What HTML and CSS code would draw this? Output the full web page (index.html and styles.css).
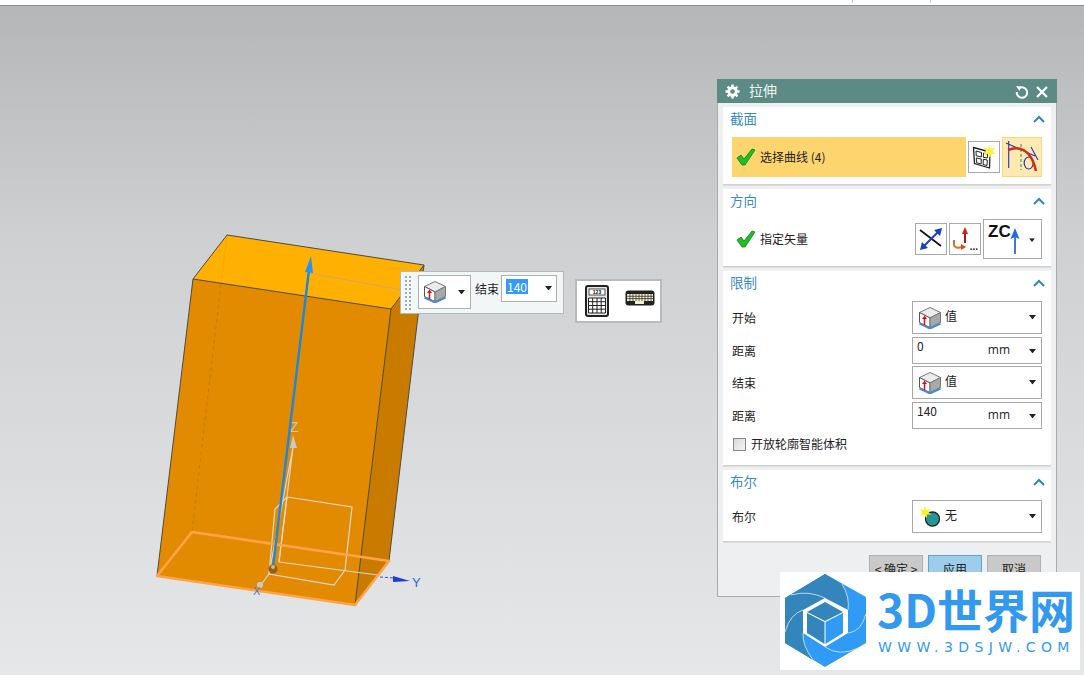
FILE: index.html
```html
<!DOCTYPE html>
<html lang="zh">
<head>
<meta charset="utf-8">
<title>拉伸</title>
<link rel="stylesheet" href="styles.css">
</head>
<body>
<svg class="defs" width="0" height="0" aria-hidden="true">
  <symbol id="cube" viewBox="0 0 22 22">
    <polygon points="11,.5 21.500,5.500 11,11 .5,5.500" fill="#ececec" stroke="#777" stroke-width="1"/>
    <polygon points=".5,5.500 11,11 11,20.500 .5,15.500" fill="#fff" stroke="#555" stroke-width="1"/>
    <polygon points="11,11 21.500,5.500 21.500,15.500 11,20.500" fill="#a9a9a9" stroke="#777" stroke-width="1"/>
    <polyline points=".5,16.500 11,21.500 21.500,16.500" fill="none" stroke="#4a8bd0" stroke-width="2"/>
    <path d="M5.500 18V11" stroke="#d11" stroke-width="1.500"/>
    <path d="M3 12 5.500 8.400 8 12Z" fill="#d11"/>
  </symbol>
  <symbol id="check" viewBox="0 0 20 20">
    <path d="M1 11 5 8 8 12 16 2 19 3 9 18 6 18Z" fill="#1fc01f" stroke="#0d7d1a" stroke-width=".8"/>
  </symbol>
  <symbol id="chev" viewBox="0 0 12 8">
    <path d="M1 7 6 2l5 5" fill="none" stroke="#2f86c4" stroke-width="2"/>
  </symbol>
  <symbol id="caret" viewBox="0 0 8 5">
    <path d="M0 0h8L4 5Z" fill="#222"/>
  </symbol>
</svg>

<div class="app">
  <div class="topbar">
    <span class="tick tick-a"></span>
    <span class="tick tick-b"></span>
  </div>
  <main class="viewport">
    <svg class="scene" viewBox="0 6 1084 669" width="1084" height="669">
      <polygon points="193,279 391,309 355,605 157,576" fill="#e38b00"/>
      <polygon points="227,235 424,265 391,309 193,279" fill="#ffb000"/>
      <polygon points="391,309 424,265 389,561 355,605" fill="#c97b00"/>
      <path d="M221 284 192 532" stroke="#b5770c" stroke-width="1" stroke-dasharray="4 3" stroke-opacity=".7" fill="none"/>
      <path d="M227 235 221 284" stroke="#f3a800" stroke-width="1" fill="none"/>
      <path d="M193 279 157 576M391 309 355 605M227 235 424 265 391 309 193 279 227 235M424 265 389 561" stroke="#4e4a45" stroke-width="1" fill="none"/>
      <path d="M309 273 402 290" stroke="#cfa866" stroke-width="1.200"/>
      <g fill="none" stroke="#d9d6cf" stroke-width="1.200">
        <path d="M287 497 352 507 345 570 334 585 269 574 275 509Z"/>
        <path d="M279 562 287 497M279 562 378 575"/>
        <path d="M269 574 293 447M279 562 293 447"/>
        <path d="M269 574 260 586"/>
      </g>
      <path d="M293 435 297 448H290Z" fill="#c9c9c9"/>
      <text class="axis axis-z" x="290" y="432">Z</text>
      <polygon points="157,576 192,532 389,561 355,605" fill="none" stroke="#ffa348" stroke-width="2.600" stroke-linejoin="round"/>
      <path d="M273 567 309 270" stroke="#1d87dc" stroke-width="2.400"/>
      <polygon points="311,256 313,273 305,272" fill="#2b93ee"/>
      <circle cx="273" cy="569" r="4.500" fill="#8a5f2a"/>
      <circle cx="273" cy="567" r="2" fill="#e2b56e"/>
      <path d="M380 577 394 578" stroke="#2a56d8" stroke-width="1" stroke-dasharray="3 2"/>
      <path d="M393 576 410 581 393 582Z" fill="#1b3fd0"/>
      <text class="axis axis-y" x="412" y="587">Y</text>
      <circle cx="260" cy="585" r="3" fill="#c8cacc"/>
      <text class="axis axis-x" x="253" y="595">X</text>
    </svg>

    <div class="float-bar">
      <div class="grip"></div>
      <div class="fb-select">
        <svg class="ic22" viewBox="0 0 22 22"><use href="#cube"/></svg>
        <svg class="caret" viewBox="0 0 8 5"><use href="#caret"/></svg>
      </div>
      <span class="fb-label">结束</span>
      <div class="fb-input">
        <span class="sel-text">140</span>
        <svg class="caret" viewBox="0 0 8 5"><use href="#caret"/></svg>
      </div>
    </div>

    <div class="float-tools">
      <svg class="calc" viewBox="0 0 24 32">
        <rect x="1" y="1" width="22" height="30" rx="2" fill="#e8e8e8" stroke="#222" stroke-width="2"/>
        <rect x="4" y="4" width="16" height="6" fill="#fff" stroke="#222" stroke-width=".8"/>
        <text class="calc-digits" x="12" y="9" text-anchor="middle">123</text>
        <path d="M3.500 13h17v15h-17ZM3.500 16.700h17M3.500 20.500h17M3.500 24.200h17M7.700 13v15M12 13v15M16.200 13v15" fill="#fff" stroke="#222" stroke-width="1"/>
      </svg>
      <svg class="keyb" viewBox="0 0 30 16">
        <rect x="0.500" y="0.500" width="29" height="15" rx="3" fill="#222"/>
        <rect x="2" y="4" width="26" height="7" fill="#f5efc9"/>
        <path d="M2 6.300h26M2 8.600h26M5 4v7M8 4v7M11 4v7M14 4v7M17 4v7M20 4v7M23 4v7M26 4v7" stroke="#222" stroke-width=".7"/>
        <rect x="10" y="11" width="9" height="3" fill="#f5efc9"/>
      </svg>
    </div>

    <section class="dialog">
      <header class="dlg-title">
        <svg class="gear" viewBox="0 0 16 16">
          <circle cx="8" cy="8" r="4" fill="none" stroke="#fff" stroke-width="3"/>
          <path d="M8 .5v3M8 12.500v3M.5 8h3M12.500 8h3M2.700 2.700l2.100 2.100M11.200 11.200l2.100 2.100M2.700 13.300l2.100-2.100M11.200 4.800l2.100-2.100" stroke="#fff" stroke-width="2.600"/>
        </svg>
        <span class="dlg-name">拉伸</span>
        <svg class="refresh" viewBox="0 0 14 14"><path d="M4 3.300A5.200 5.200 0 1 1 1.800 7" fill="none" stroke="#fff" stroke-width="2"/><path d="M1 1 6 1.500 4.500 6Z" fill="#fff"/></svg>
        <svg class="close" viewBox="0 0 12 12"><path d="M1 1l10 10M11 1 1 11" stroke="#fff" stroke-width="2.200"/></svg>
      </header>
      <div class="dlg-body">
        <div class="group">
          <div class="group-head"><span>截面</span><svg class="chev"><use href="#chev"/></svg></div>
          <div class="row-tall">
            <div class="pick-bar">
              <svg class="check"><use href="#check"/></svg>
              <span class="row-text">选择曲线 (4)</span>
            </div>
            <button class="icon-btn">
              <svg class="ic26" viewBox="0 0 26 26">
                <path d="M2.500 3.500 19 8 18.500 24 3.500 19.500Z" fill="#fff" stroke="#222" stroke-width="1.300"/>
                <path d="M5 7 10.500 8.500 10.300 13 5.200 11.800ZM12.500 9 16.500 10.200 16.300 14 12.300 13.300ZM5.300 14 10.300 15 10.100 20 5.500 18.600ZM12.300 15.300 16.300 16 16 21.500 12.100 20.500Z" fill="#fff" stroke="#222" stroke-width="1"/>
                <path d="M18 1 19.500 5 24 3.500 21.500 7 25 10 20.500 9.800 19 14 17 10 12.500 10.500 15 7 12.500 3.500 17 5Z" fill="#fff23a"/>
              </svg>
            </button>
            <button class="icon-btn active">
              <svg class="ic34" viewBox="0 0 34 34">
                <path d="M3.700 1V28M1 3 30 16M26 7 33 20" stroke="#2233bb" stroke-width="1.100" fill="none"/>
                <path d="M16 4V30" stroke="#2a8a6a" stroke-width="1" stroke-dasharray="3 2"/>
                <ellipse cx="23.700" cy="23" rx="4.500" ry="6" fill="none" stroke="#2233bb" stroke-width="1.200"/>
                <path d="M3 10C12 6 26 7 31 31" fill="none" stroke="#d62a10" stroke-width="2.500"/>
              </svg>
            </button>
          </div>
        </div>

        <div class="group">
          <div class="group-head"><span>方向</span><svg class="chev"><use href="#chev"/></svg></div>
          <div class="row-tall dir-row">
            <svg class="check check-dir"><use href="#check"/></svg>
            <span class="dir-label row-text">指定矢量</span>
            <button class="icon-btn">
              <svg class="ic26" viewBox="0 0 26 26">
                <path d="M2 4 23 20" stroke="#111" stroke-width="1.600"/>
                <path d="M6 20 20 6" stroke="#1a3fc0" stroke-width="2"/>
                <path d="M24 2 22 10 16 4ZM2 24 4 16 10 22Z" fill="#1a3fc0"/>
              </svg>
            </button>
            <button class="icon-btn">
              <svg class="ic26" viewBox="0 0 26 26">
                <path d="M13 17V6" stroke="#a02010" stroke-width="2"/>
                <path d="M13 1 16 8H10Z" fill="#c42a10"/>
                <path d="M2 14V19Q3 23 10 21" fill="none" stroke="#e0701a" stroke-width="2"/>
                <path d="M9 18 14 21 9 24Z" fill="#d8461a"/>
              </svg>
              <span class="dots">...</span>
            </button>
            <div class="zc-select">
              <span class="zc-text">ZC</span>
              <svg class="zc-arrow" viewBox="0 0 10 26"><path d="M5 8V26" stroke="#1a50c8" stroke-width="1.600"/><path d="M5 0 9.500 11 5 9 .5 11Z" fill="#1d6fe0"/></svg>
              <svg class="caret small" viewBox="0 0 8 5"><use href="#caret"/></svg>
            </div>
          </div>
        </div>

        <div class="group group-limit">
          <div class="group-head"><span>限制</span><svg class="chev"><use href="#chev"/></svg></div>
          <div class="form-row row-33">
            <span class="label">开始</span>
            <div class="select">
              <svg class="ic22" viewBox="0 0 22 22"><use href="#cube"/></svg>
              <span class="val">值</span>
              <svg class="caret" viewBox="0 0 8 5"><use href="#caret"/></svg>
            </div>
          </div>
          <div class="form-row row-27">
            <span class="label">距离</span>
            <div class="input"><span class="num">0</span><span class="unit">mm</span><svg class="caret" viewBox="0 0 8 5"><use href="#caret"/></svg></div>
          </div>
          <div class="form-row row-33">
            <span class="label">结束</span>
            <div class="select">
              <svg class="ic22" viewBox="0 0 22 22"><use href="#cube"/></svg>
              <span class="val">值</span>
              <svg class="caret" viewBox="0 0 8 5"><use href="#caret"/></svg>
            </div>
          </div>
          <div class="form-row row-27">
            <span class="label">距离</span>
            <div class="input"><span class="num">140</span><span class="unit">mm</span><svg class="caret" viewBox="0 0 8 5"><use href="#caret"/></svg></div>
          </div>
          <label class="checkline"><span class="box"></span><span>开放轮廓智能体积</span></label>
        </div>

        <div class="group group-bool">
          <div class="group-head"><span>布尔</span><svg class="chev"><use href="#chev"/></svg></div>
          <div class="form-row row-33">
            <span class="label">布尔</span>
            <div class="select">
              <svg class="ic22" viewBox="0 0 22 22">
                <circle cx="13.500" cy="13" r="7" fill="#23969a" stroke="#222" stroke-width="1.300"/>
                <path d="M6 0 7.500 4 11 3 9.500 6.500 12.500 8.500 8.500 8.500 7.500 12 5.500 9 1.500 10 3.500 6.500 1 3.500 4.500 4Z" fill="#fff02a"/>
              </svg>
              <span class="val">无</span>
              <svg class="caret" viewBox="0 0 8 5"><use href="#caret"/></svg>
            </div>
          </div>
        </div>

        <footer class="dlg-actions">
          <button class="btn">&lt; 确定 &gt;</button>
          <button class="btn primary">应用</button>
          <button class="btn">取消</button>
        </footer>
      </div>
    </section>

    <aside class="logo">
      <svg class="logo-mark" viewBox="0 0 92 98">
        <polygon points="45,2 86,25 86,71 45,95 5,71 5,26" fill="#2f9bf5"/>
        <path d="M45 2 62 12Q70 25 68 38L45 26 23 38V61Q22 73 33 88L5 71V26Z" fill="#3585bd"/>
        <g fill="none" stroke="#b9d9f2" stroke-width="1">
          <path d="M62 12Q70 25 68 38"/>
          <path d="M23 61Q22 73 33 88"/>
          <path d="M5 60Q10 42 23 38"/>
          <path d="M86 42Q81 60 68 61"/>
          <path d="M45 26Q28 18 11 23"/>
          <path d="M45 75Q60 85 78 76"/>
        </g>
        <polygon points="45,26 68,38 68,61 45,75 23,61 23,38" fill="#fff"/>
        <polygon points="45,30 63,40 45,49 27,40" fill="#3585bd"/>
        <polygon points="27,41 44.500,50 44.500,72 27,61" fill="#3585bd"/>
        <polygon points="45.500,50 63,41 63,61 45.500,72" fill="#2f9bf5"/>
      </svg>
      <div class="logo-text">
        <div class="logo-name">3D世界网</div>
        <div class="logo-url">WWW.3DSJW.COM</div>
      </div>
    </aside>
  </main>
</div>
</body>
</html>
```
FILE: styles.css
```css
* { box-sizing: border-box; }
html, body { margin: 0; padding: 0; }
body {
  width: 1084px;
  height: 675px;
  overflow: hidden;
  font-family: "Noto Sans CJK SC", "Liberation Sans", sans-serif;
  font-size: 12px;
  color: #222;
}
.defs { position: absolute; }
.app { display: flex; flex-direction: column; height: 675px; }

.topbar {
  height: 6px;
  flex: none;
  background: #fff;
  border-bottom: 1px solid #8b8f8f;
  display: flex;
}
.tick { width: 1px; height: 3px; background: #c4c4c4; }
.tick-a { margin-left: 852px; }
.tick-b { margin-left: 77px; }

.viewport {
  flex: 1;
  position: relative;
  overflow: hidden;
  background: linear-gradient(#b5b6b8 0%, #cfd0d2 35%, #e6e7e9 100%);
}
.scene { position: absolute; left: 0; top: 0; }
.axis { font-family: "Liberation Sans", sans-serif; font-size: 12px; }
.axis-z { fill: #c8c8c8; font-size: 14px; }
.axis-y { fill: #2a62e0; font-size: 13px; }
.axis-x { fill: #4a7fe0; font-size: 11px; }

.float-bar {
  position: absolute;
  left: 400px;
  top: 265px;
  width: 164px;
  height: 43px;
  display: flex;
  align-items: flex-start;
  padding: 3px 0 0 3px;
  background: #f1f6f7;
  border: 1px solid #b5b8b8;
}
.grip {
  width: 9px;
  height: 36px;
  flex: none;
  background-image: radial-gradient(circle, #a9a9a9 1.2px, transparent 1.3px);
  background-size: 4px 4px;
}
.fb-select {
  width: 53px;
  height: 34px;
  margin-left: 5px;
  flex: none;
  display: flex;
  align-items: center;
  justify-content: space-between;
  padding: 0 5px 0 5px;
  background: #fff;
  border: 1px solid #aeb0b0;
}
.fb-label { margin: 2px 0 0 4px; width: 26px; line-height: 24px; flex: none; }
.fb-input {
  width: 56px;
  height: 27px;
  flex: none;
  display: flex;
  align-items: center;
  justify-content: space-between;
  padding: 0 4px 0 4px;
  background: #fff;
  border: 1px solid #aeb0b0;
}
.sel-text { background: #3399ff; color: #fff; line-height: 15px; padding: 0 1px; margin-top: -4px; }

.float-tools {
  position: absolute;
  left: 575px;
  top: 273px;
  width: 87px;
  height: 44px;
  display: flex;
  align-items: center;
  gap: 16px;
  padding-left: 8px;
  background: #fff;
  border: 2px solid #b9bbbb;
}
.calc { width: 24px; height: 32px; flex: none; }
.keyb { width: 30px; height: 16px; flex: none; margin-top: -6px; }
.calc-digits { font-family: "Liberation Sans", sans-serif; font-size: 5px; font-weight: 700; fill: #111; }

.dialog {
  position: absolute;
  left: 717px;
  top: 73px;
  width: 340px;
  height: 518px;
  display: flex;
  flex-direction: column;
  border: 1px solid #a9abab;
  border-top: 0;
  background: #eeeff0;
}
.dlg-title {
  height: 24px;
  flex: none;
  margin: 0 -1px;
  display: flex;
  align-items: center;
  padding: 0 8px;
  background: #5c8a85;
  color: #eef5f5;
}
.gear { width: 15px; height: 15px; flex: none; }
.dlg-name { margin: -2px 0 0 9px; font-size: 14px; line-height: 20px; flex: 1; }
.refresh { width: 14px; height: 14px; flex: none; margin-right: 7px; margin-top: 2px; }
.close { width: 12px; height: 12px; flex: none; margin-right: 1px; margin-top: 1px; }
.dlg-body { display: flex; flex-direction: column; gap: 4px; padding: 4px 5px 0; flex: 1; }

.group {
  background: #fff;
  border-bottom: 1px solid #cfd0d0;
  box-shadow: 0 1px 0 #dcdddd;
  padding: 0 9px 7px;
}
.group-limit { padding-bottom: 14px; height: 195px; }
.group-bool { padding-bottom: 7px; }
.group-head {
  height: 30px;
  margin: 0 0 0 -2px;
  display: flex;
  align-items: flex-start;
  justify-content: space-between;
  padding-top: 1px;
  font-size: 13.500px;
  line-height: 20px;
  color: #3a8cc6;
}
.chev { width: 12px; height: 8px; margin: 7px -3px 0 0; flex: none; }

.row-tall { height: 40px; display: flex; align-items: center; gap: 2px; }
.row-text { margin-top: -2px; }
.pick-bar {
  width: 234px;
  height: 40px;
  flex: none;
  display: flex;
  align-items: center;
  background: #fdd56f;
  padding-left: 4px;
}
.check { width: 20px; height: 20px; flex: none; margin-right: 4px; }
.icon-btn {
  position: relative;
  width: 32px;
  height: 32px;
  flex: none;
  padding: 0;
  display: flex;
  align-items: center;
  justify-content: center;
  background: #fff;
  border: 1px solid #a8a8a8;
}
.icon-btn.active {
  width: 40px;
  height: 40px;
  background: #fdeab3;
  border-color: #fbd779;
}
.ic26 { width: 26px; height: 26px; }
.ic34 { width: 34px; height: 34px; }
.ic22 { width: 22px; height: 22px; flex: none; }
.dots {
  position: absolute;
  right: 2px;
  bottom: 2px;
  font: 700 10px/10px "Liberation Sans", sans-serif;
  color: #222;
}
.dir-row .check-dir { margin: 0 2px 0 4px; }
.dir-label { flex: 1; }
.zc-select {
  width: 59px;
  height: 40px;
  flex: none;
  display: flex;
  align-items: flex-start;
  background: #fff;
  border: 1px solid #a8a8a8;
  padding: 3px 6px 0 4px;
  position: relative;
}
.zc-text { font: 700 17px/17px "Liberation Sans", sans-serif; color: #111; }
.zc-arrow { width: 10px; height: 26px; margin: 5px 0 0 -1px; flex: none; }
.caret { width: 7px; height: 4.400px; flex: none; }
.caret.small { width: 6px; height: 4px; margin: 15px 0 0 auto; }

.form-row { display: flex; align-items: center; justify-content: space-between; margin-bottom: 3px; }
.form-row.row-33 { height: 33px; }
.form-row.row-27 { height: 27px; }
.form-row.row-27 + .form-row.row-33 { margin-top: -1px; }
.group-bool .form-row { margin-bottom: 1px; }
.label { line-height: 18px; }
.select, .input {
  width: 130px;
  height: 100%;
  display: flex;
  align-items: center;
  background: #fff;
  border: 1px solid #a8a8a8;
  padding: 0 5px 0 6px;
}
.select .val { flex: 1; margin-left: 4px; font-size: 12px; margin-top: -4px; }
.input { align-items: flex-start; padding-top: 0; padding-left: 4px; }
.num { flex: 1; line-height: 16px; }
.unit { font-family: "Open Sans", sans-serif; font-size: 12px; line-height: 18px; margin: 3px 19px 0 0; }
.input .caret { margin-top: 11px; }
.checkline {
  display: flex;
  align-items: center;
  gap: 5px;
  margin: 6px 0 0 1px;
  line-height: 18px;
}
.box {
  width: 13px;
  height: 13px;
  flex: none;
  border: 1px solid #7f8788;
  background: linear-gradient(135deg, #d8d8d8, #f5f5f5);
}

.dlg-actions { display: flex; gap: 5px; justify-content: flex-end; padding: 9px 10px 0 0; }
.btn {
  width: 54px;
  height: 30px;
  padding: 0 0 4px;
  font-family: inherit;
  font-size: 12px;
  color: #222;
  background: #c9c9c9;
  border: 1px solid #b0b0b0;
}
.btn.primary { background: #9dcdea; border-color: #5aa5d8; }

.logo {
  position: absolute;
  left: 780px;
  top: 566px;
  width: 300px;
  height: 98px;
  display: flex;
  background: #fff;
}
.logo-mark { width: 92px; height: 98px; flex: none; }
.logo-text { display: flex; flex-direction: column; margin-left: 6px; color: #3399ee; }
.logo-name { font-size: 46px; font-weight: 700; line-height: 64px; margin: 4px 0 0 -1px; white-space: nowrap; }
.logo-url { font: 14px/18px "DejaVu Sans", sans-serif; letter-spacing: 5.400px; white-space: nowrap; margin-top: -2px; }
```
